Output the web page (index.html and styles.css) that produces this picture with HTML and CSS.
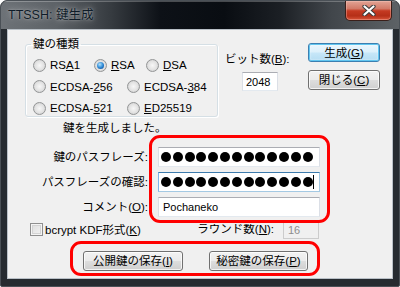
FILE: index.html
```html
<!DOCTYPE html>
<html lang="ja">
<head>
    <meta charset="UTF-8">
    <meta name="viewport" content="width=device-width, initial-scale=1.0">
    <title>TTSSH: 鍵生成</title>
    <link rel="stylesheet" href="styles.css">
</head>
<body>
    <div class="window">
        <div class="titlebar">
            <span class="title">TTSSH: 鍵生成</span>
            <button class="close-btn">
                <svg width="14" height="11" viewBox="0 0 14 11">
                    <path d="M2.5 1.5 L11.5 9.5 M11.5 1.5 L2.5 9.5" stroke="#3b3b3b" stroke-width="4.2" stroke-linecap="round"/>
                    <path d="M2.5 1.5 L11.5 9.5 M11.5 1.5 L2.5 9.5" stroke="#ffffff" stroke-width="2.2" stroke-linecap="round"/>
                </svg>
            </button>
        </div>
        <div class="frame">
            <div class="client">
                <div class="top-row">
                    <fieldset class="key-type">
                        <legend>鍵の種類</legend>
                        <div class="radio-row">
                            <label class="opt w61"><span class="radio"></span>RS<u>A</u>1</label>
                            <label class="opt w52"><span class="radio on"></span><u>R</u>SA</label>
                            <label class="opt"><span class="radio"></span><u>D</u>SA</label>
                        </div>
                        <div class="radio-row">
                            <label class="opt w94"><span class="radio"></span>ECDSA-<u>2</u>56</label>
                            <label class="opt"><span class="radio"></span>ECDSA-<u>3</u>84</label>
                        </div>
                        <div class="radio-row">
                            <label class="opt w94"><span class="radio"></span>ECDSA-<u>5</u>21</label>
                            <label class="opt"><span class="radio"></span><u>E</u>D25519</label>
                        </div>
                    </fieldset>
                    <div class="bits">
                        <div class="bits-label">ビット数(<u>B</u>):</div>
                        <div class="field bits-field">2048</div>
                    </div>
                    <div class="actions">
                        <button class="btn btn-default">生成(<u>G</u>)</button>
                        <button class="btn btn-close">閉じる(<u>C</u>)</button>
                    </div>
                </div>

                <div class="message">鍵を生成しました。</div>

                <div class="form">
                    <label>鍵のパスフレーズ:</label>
                    <div class="field pw">
                        <span class="dot"></span><span class="dot"></span><span class="dot"></span><span class="dot"></span><span class="dot"></span><span class="dot"></span><span class="dot"></span><span class="dot"></span><span class="dot"></span><span class="dot"></span><span class="dot"></span><span class="dot"></span><span class="dot"></span>
                    </div>
                    <label>パスフレーズの確認:</label>
                    <div class="field pw focused">
                        <span class="dot"></span><span class="dot"></span><span class="dot"></span><span class="dot"></span><span class="dot"></span><span class="dot"></span><span class="dot"></span><span class="dot"></span><span class="dot"></span><span class="dot"></span><span class="dot"></span><span class="dot"></span><span class="dot"></span><span class="caret"></span>
                    </div>
                    <label>コメント(<u>O</u>):</label>
                    <div class="field comment">Pochaneko</div>
                </div>

                <div class="options-row">
                    <span class="checkbox"></span>
                    <span class="check-text">bcrypt KDF形式(<u>K</u>)</span>
                    <span class="rounds-label"><span>ラウンド数(<u>N</u>):</span></span>
                    <div class="field rounds-field">16</div>
                </div>

                <div class="save-row">
                    <button class="btn save-pub">公開鍵の保存(<u>I</u>)</button>
                    <button class="btn save-priv">秘密鍵の保存(<u>P</u>)</button>
                </div>

                <div class="mark mark-fields"></div>
                <div class="mark mark-save"></div>
            </div>
        </div>
    </div>
</body>
</html>
```

FILE: styles.css
```css
body {
    margin: 0;
    padding: 0;
    background: #ffffff;
}
.window {
    width: 400px;
    height: 287px;
    box-sizing: border-box;
    border: 1px solid #4a5056;
    border-radius: 7px 7px 2px 2px;
    overflow: hidden;
    background: #262b30;
    display: flex;
    flex-direction: column;
    font-family: "Liberation Sans", "Noto Sans CJK JP", sans-serif;
    font-size: 11.5px;
    line-height: 14px;
    color: #000;
}
.titlebar {
    height: 28px;
    flex-shrink: 0;
    display: flex;
    align-items: flex-start;
    padding-left: 7px;
    background: linear-gradient(90deg, #6d7277 0%, #5d6267 14%, #353a3f 28%, #0d1117 40%, #090d12 56%, #1b1f24 70%, #41464b 83%, #5d6266 100%);
    box-shadow: inset 0 1px 0 rgba(255, 255, 255, 0.25);
}
.title {
    margin-top: 7px;
    font-size: 12.5px;
    line-height: 15px;
    color: #0f1c28;
    text-shadow: 0 0 6px rgba(255, 255, 255, 0.55), 0 0 2px rgba(255, 255, 255, 0.4);
}
.close-btn {
    margin-left: auto;
    margin-right: 7px;
    width: 47px;
    height: 20px;
    padding: 0;
    border: 1px solid #3a1f1a;
    border-top: none;
    border-radius: 0 0 5px 5px;
    background: linear-gradient(#e2a495 0%, #d27a68 40%, #c53a22 52%, #b52f18 78%, #d9553a 100%);
    box-shadow: inset 0 0 0 1px rgba(255, 210, 200, 0.35);
    display: flex;
    align-items: center;
    justify-content: center;
}
.frame {
    flex-grow: 1;
    padding: 0 6px 7px 6px;
}
.client {
    position: relative;
    height: 250px;
    box-sizing: border-box;
    border: 1px solid #b9c0c7;
    background: #f0f0f0;
}
.top-row {
    display: flex;
    align-items: flex-start;
}
.key-type {
    margin: 7px 0 0 17px;
    padding: 0;
    width: 193px;
    height: 80px;
    box-sizing: border-box;
    border: 1px solid #d5dfe5;
    border-radius: 3px;
    box-shadow: inset 1px 1px 0 #ffffff, 1px 1px 0 #ffffff;
    display: flex;
    flex-direction: column;
    gap: 5.5px;
}
.key-type legend {
    margin-left: 5px;
    padding: 0 2px;
    line-height: 14px;
}
.radio-row {
    height: 16px;
    display: flex;
    align-items: center;
    padding-left: 7px;
}
.radio-row:first-of-type {
    margin-top: 6px;
}
.opt {
    display: flex;
    align-items: center;
    white-space: nowrap;
}
.w61 { width: 61px; }
.w52 { width: 52px; }
.w94 { width: 94px; }
.radio {
    width: 13px;
    height: 13px;
    box-sizing: border-box;
    border-radius: 50%;
    border: 1px solid #939596;
    background: radial-gradient(circle at 50% 50%, #f7f7f7 0%, #e2e2e2 55%, #d0d0d0 80%, #f2f2f2 100%);
    margin-right: 4px;
    display: flex;
    align-items: center;
    justify-content: center;
}
.radio.on::after {
    content: "";
    width: 7px;
    height: 7px;
    border-radius: 50%;
    background: radial-gradient(circle at 40% 35%, #b5e2fb 0%, #3c95dc 45%, #1562b0 75%, #0d467e 100%);
}
.bits {
    margin: 22px 0 0 7px;
    width: 57px;
}
.bits-label {
    white-space: nowrap;
}
.field {
    height: 20px;
    box-sizing: border-box;
    background: #ffffff;
    border: 1px solid #dbdfe6;
    border-top-color: #abadb3;
    border-bottom-color: #e3e9ef;
    display: flex;
    align-items: center;
}
.bits-field {
    margin: 6px 0 0 17px;
    width: 36px;
    height: 19px;
    padding-left: 3px;
    font-size: 11px;
}
.actions {
    margin: 13px 0 0 26px;
    display: flex;
    flex-direction: column;
    gap: 8px;
}
.btn {
    width: 72px;
    height: 20px;
    padding: 0;
    border: 1px solid #707070;
    border-radius: 3px;
    background: linear-gradient(#f2f2f2 0%, #ebebeb 48%, #dddddd 52%, #cfcfcf 100%);
    box-shadow: inset 0 0 0 1px rgba(255, 255, 255, 0.75);
    font-family: "Liberation Sans", "Noto Sans CJK JP", sans-serif;
    font-size: 11.5px;
    line-height: 14px;
    color: #000;
}
.btn-default {
    height: 19px;
    border-color: #3c7fb1;
    background: linear-gradient(#ebf6fd 0%, #dcf0fb 48%, #c7e7f8 52%, #b3dcf3 100%);
    box-shadow: inset 0 0 0 1px #61c6f0, inset 0 0 2px 1px rgba(255, 255, 255, 0.7);
}
.message {
    margin: 4px 0 0 55px;
}
.form {
    margin-top: 12px;
    display: grid;
    grid-template-columns: 140px 162px;
    grid-auto-rows: 20px;
    column-gap: 10px;
    row-gap: 5px;
}
.form label {
    display: flex;
    align-items: center;
    justify-content: flex-end;
    white-space: nowrap;
}
.pw {
    padding-left: 2px;
    gap: 1.8px;
}
.dot {
    width: 10px;
    height: 10px;
    border-radius: 50%;
    background: #000;
    flex-shrink: 0;
}
.caret {
    width: 1px;
    height: 14px;
    background: #000;
    margin-left: -1px;
}
.focused {
    border-color: #a4c9e3;
    border-top-color: #3d7bad;
    border-left-color: #7eb4ea;
}
.comment {
    padding-left: 4px;
    font-size: 11px;
}
.options-row {
    margin-top: 3px;
    height: 19px;
    display: flex;
    align-items: center;
    padding-left: 22px;
    padding-right: 73px;
}
.checkbox {
    width: 13px;
    height: 13px;
    box-sizing: border-box;
    border: 1px solid #8f8f8f;
    background: linear-gradient(135deg, #dcdcdc 0%, #f4f4f4 100%);
    box-shadow: inset 0 0 0 1px #f4f4f4, inset 0 0 0 2px #d3d3d3;
}
.check-text {
    margin-left: 2px;
    white-space: nowrap;
}
.rounds-label {
    margin-left: auto;
    height: 12px;
    overflow: hidden;
    display: flex;
    align-items: flex-end;
    white-space: nowrap;
}
.rounds-field {
    margin-left: 9px;
    width: 36px;
    height: 19px;
    padding-left: 4px;
    background: #f0f0f0;
    border-color: #cccccc;
    color: #8d8d8d;
    font-size: 11px;
}
.save-row {
    margin-top: 12px;
    display: flex;
}
.save-pub {
    margin-left: 75px;
    width: 100px;
}
.save-priv {
    margin-left: 26px;
    width: 99px;
}
.mark {
    position: absolute;
    box-sizing: border-box;
    border: 3px solid #ff0000;
    border-radius: 11px;
    pointer-events: none;
}
.mark-fields {
    left: 141px;
    top: 105px;
    width: 181px;
    height: 88px;
}
.mark-save {
    left: 62px;
    top: 211px;
    width: 250px;
    height: 35px;
}
```
